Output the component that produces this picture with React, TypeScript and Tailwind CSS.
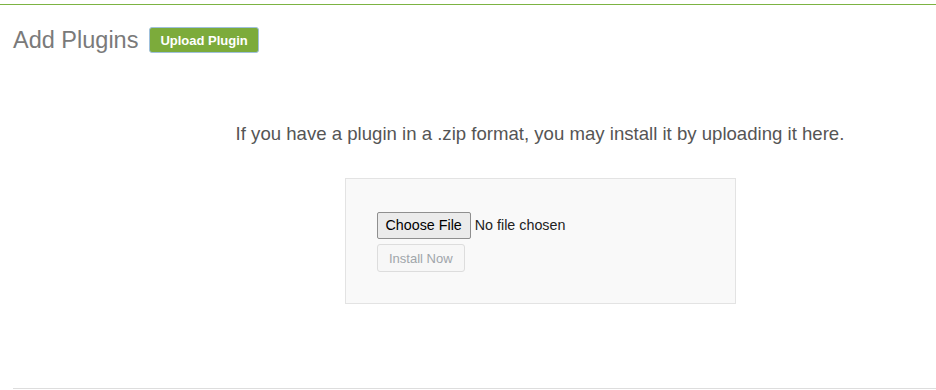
export default function App() {
  return (
    <div className="w-[936px] h-[390px] bg-white overflow-hidden flex flex-col" style={{ fontFamily: '"Liberation Sans", Arial, sans-serif' }}>
      <div className="mt-[4px] h-px bg-[#7cb342]" />
      <div className="flex items-center pl-[13px] mt-[22px] h-[26px]">
        <h1 className="text-[23.5px] leading-[26px] text-[#7a7a7a] font-normal">Add Plugins</h1>
        <button className="ml-[11px] h-[26px] px-[10px] rounded-[3px] border border-[#9fc0dc] bg-[#7cab3b] text-white text-[13px] font-bold leading-none">
          Upload Plugin
        </button>
      </div>
      <div className="pl-[144px] flex flex-col items-center">
        <p className="mt-[70px] text-[18.6px] leading-[22px] text-[#555] whitespace-nowrap">
          If you have a plugin in a .zip format, you may install it by uploading it here.
        </p>
        <div className="mt-[33px] w-[391px] h-[126px] bg-[#f9f9f9] border border-[#e3e3e3] pl-[31px] pt-[33px]">
          <div className="flex items-center">
            <button className="h-[27px] px-[8px] text-[14.3px] leading-none text-black bg-[#ebebeb] border border-[#8f8f8f] rounded-[2px]">
              Choose File
            </button>
            <span className="ml-[4px] text-[14.3px] text-[#222]">No file chosen</span>
          </div>
          <button className="mt-[5px] h-[28px] px-[11.5px] text-[13px] leading-none text-[#a0a5aa] bg-[#f7f7f7] border border-[#dddddd] rounded-[3px]">
            Install Now
          </button>
        </div>
      </div>
      <div className="mt-auto ml-[13px] h-px bg-[#dddddd] mb-px" />
    </div>
  );
}
